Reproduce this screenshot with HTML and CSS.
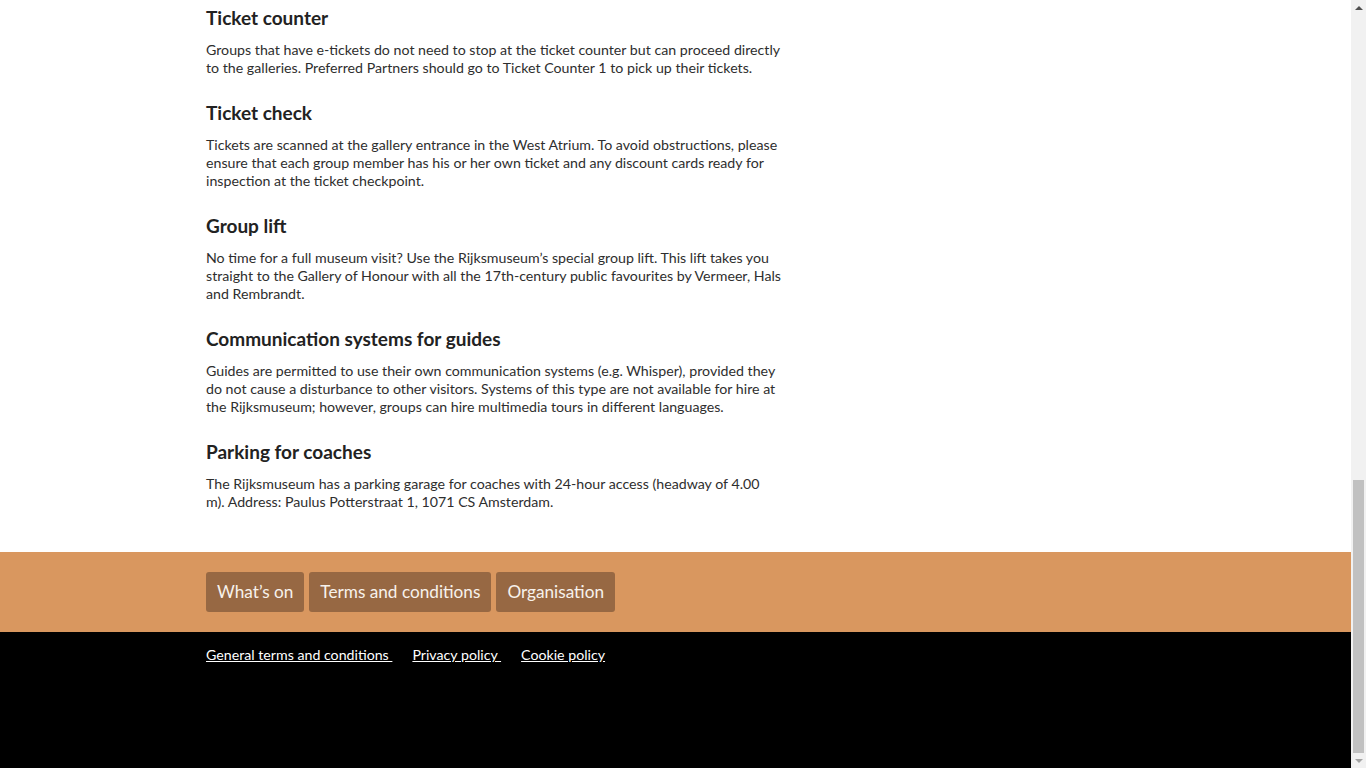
FILE: index.html
```html
<!DOCTYPE html>
<html lang="en">
<head>
<meta charset="utf-8">
<title>Groups – Rijksmuseum</title>
<link rel="stylesheet" href="styles.css">
</head>
<body>
<div class="window">
  <div class="page">
    <main class="content">
      <section class="block">
        <h2>Ticket counter</h2>
        <p>Groups that have e-tickets do not need to stop at the ticket counter but can proceed directly to the galleries. Preferred Partners should go to Ticket Counter 1 to pick up their tickets.</p>
      </section>
      <section class="block">
        <h2>Ticket check</h2>
        <p>Tickets are scanned at the gallery entrance in the West Atrium. To avoid obstructions, please ensure that each group member has his or her own ticket and any discount cards ready for inspection at the ticket checkpoint.</p>
      </section>
      <section class="block">
        <h2>Group lift</h2>
        <p>No time for a full museum visit? Use the Rijksmuseum’s special group lift. This lift takes you straight to the Gallery of Honour with all the 17th-century public favourites by Vermeer, Hals and Rembrandt.</p>
      </section>
      <section class="block">
        <h2>Communication systems for guides</h2>
        <p>Guides are permitted to use their own communication systems (e.g. Whisper), provided they do not cause a disturbance to other visitors. Systems of this type are not available for hire at the Rijksmuseum; however, groups can hire multimedia tours in different languages.</p>
      </section>
      <section class="block">
        <h2>Parking for coaches</h2>
        <p>The Rijksmuseum has a parking garage for coaches with 24-hour access (headway of 4.00 m). Address: Paulus Potterstraat 1, 1071 CS Amsterdam.</p>
      </section>
    </main>
    <nav class="footer-nav">
      <a class="footer-btn" href="#">What’s on</a>
      <a class="footer-btn" href="#">Terms and conditions</a>
      <a class="footer-btn" href="#">Organisation</a>
    </nav>
    <footer class="footer-legal">
      <a href="#">General terms and conditions </a>
      <a href="#">Privacy policy </a>
      <a href="#">Cookie policy</a>
    </footer>
  </div>
  <div class="scrollbar" aria-hidden="true">
    <div class="sb-arrow sb-up"></div>
    <div class="sb-track"><div class="sb-thumb"></div></div>
    <div class="sb-arrow sb-down"></div>
  </div>
</div>
</body>
</html>
```
FILE: styles.css
```css
* { box-sizing: border-box; }
html, body { margin: 0; padding: 0; height: 100%; }
body {
  font-family: Lato, "Open Sans", sans-serif;
  color: #2e2e2e;
  background: #fff;
  overflow: hidden;
}
.window {
  display: flex;
  height: 768px;
}
.page {
  flex: 1;
  display: flex;
  flex-direction: column;
  min-width: 0;
}
.content {
  padding: 6px 0 17px 206px;
}
.block {
  width: 575px;
  margin-bottom: 24px;
}
.block h2 {
  margin: 0 0 11px;
  font-size: 19px;
  line-height: 24px;
  font-weight: 700;
  color: #222;
}
.block p {
  margin: 0;
  font-size: 14.2px;
  line-height: 18px;
}
.footer-nav {
  background: #d9975f;
  padding: 20px 0 20px 206px;
  display: flex;
  gap: 5px;
}
.footer-btn {
  display: block;
  height: 40px;
  line-height: 40px;
  padding: 0 11px;
  background: #976843;
  border-radius: 3px;
  color: #f7f2ec;
  text-decoration: none;
  font-size: 17.2px;
}
.footer-legal {
  flex: 1;
  background: #000;
  padding: 14px 0 0 206px;
  display: flex;
  align-items: flex-start;
  gap: 20px;
}
.footer-legal a {
  color: #fff;
  font-size: 14.2px;
  line-height: 18px;
  white-space: pre;
  text-decoration: underline;
}
.scrollbar {
  width: 15px;
  background: #f1f1f1;
  display: flex;
  flex-direction: column;
}
.sb-arrow {
  height: 15px;
  display: flex;
  align-items: center;
  justify-content: center;
}
.sb-up::before, .sb-down::before {
  content: "";
  width: 0;
  height: 0;
  border-left: 4px solid transparent;
  border-right: 4px solid transparent;
}
.sb-up::before { border-bottom: 4px solid #505050; }
.sb-down::before { border-top: 4px solid #a3a3a3; }
.sb-track {
  flex: 1;
  display: flex;
  flex-direction: column;
  justify-content: flex-end;
  padding: 0 2px;
}
.sb-thumb {
  height: 273px;
  background: #c1c1c1;
}
```
